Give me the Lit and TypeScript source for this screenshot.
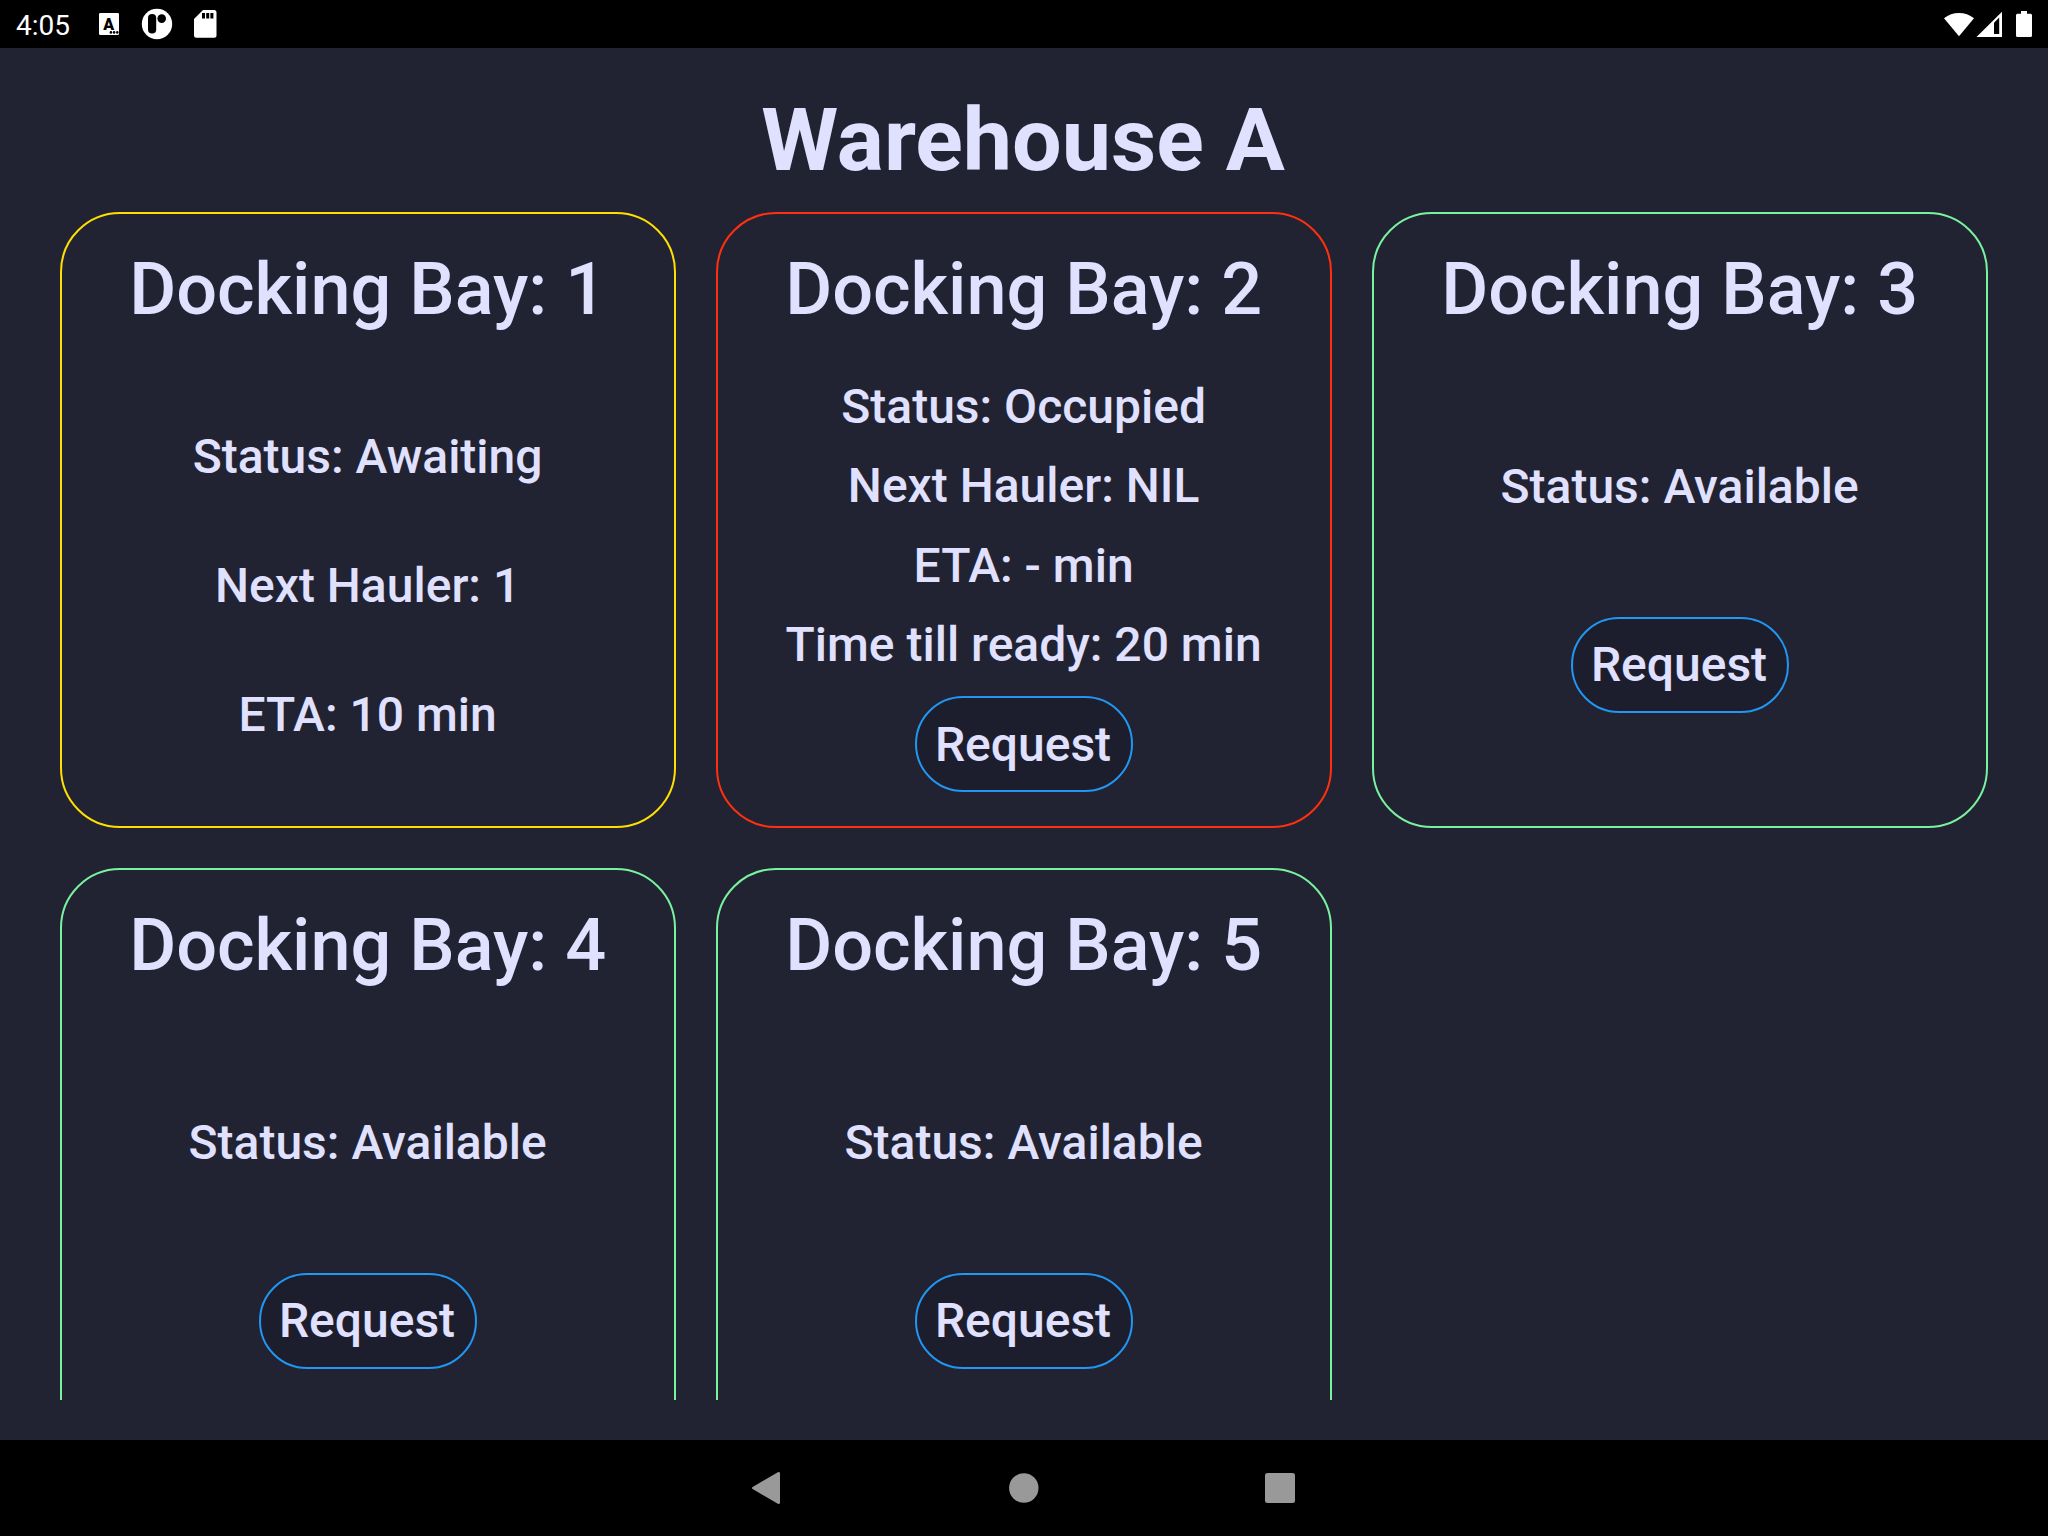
import { LitElement, html, css, svg } from "lit";
import { customElement, property } from "lit/decorators.js";
import { classMap } from "lit/directives/class-map.js";

type State = "awaiting" | "occupied" | "available";
interface Bay {
  id: number;
  state: State;
  lines: string[];
  request: boolean;
}

const BAYS: Bay[] = [
  { id: 1, state: "awaiting", lines: ["Status: Awaiting", "Next Hauler: 1", "ETA: 10 min"], request: false },
  {
    id: 2,
    state: "occupied",
    lines: ["Status: Occupied", "Next Hauler: NIL", "ETA: - min", "Time till ready: 20 min"],
    request: true,
  },
  { id: 3, state: "available", lines: ["Status: Available"], request: true },
  { id: 4, state: "available", lines: ["Status: Available"], request: true },
  { id: 5, state: "available", lines: ["Status: Available"], request: true },
];

@customElement("status-bar")
export class StatusBar extends LitElement {
  static styles = css`
    :host {
      display: flex;
      justify-content: space-between;
      height: 48px;
      background: #000;
      color: #fff;
    }
    .side {
      display: flex;
      align-items: center;
    }
    .clock {
      width: 60px;
      padding: 2px 0 0 16px;
      font: 400 28px/33px Roboto, sans-serif;
    }
    svg {
      display: block;
      height: 48px;
      fill: #fff;
    }
    .cut {
      fill: #000;
    }
    .letter {
      font: 900 16px Roboto, sans-serif;
      fill: #000;
      text-anchor: middle;
    }
  `;

  render() {
    return html`
      <div class="side">
        <div class="clock">4:05</div>
        <svg width="150" viewBox="76 0 150 48">
          <rect x="99" y="13" width="20" height="22" rx="1.2" />
          ${svg`<text class="letter" x="108.800" y="29.600">A</text>`}
          <circle class="cut" cx="110.900" cy="32.400" r="1.300" />
          <circle class="cut" cx="114.100" cy="32.400" r="1.300" />
          <circle class="cut" cx="117.300" cy="32.400" r="1.300" />
          <circle cx="157" cy="24" r="15.2" />
          <rect class="cut" x="148" y="14" width="8.2" height="19.6" rx="4" />
          <circle class="cut" cx="161.7" cy="18.6" r="4.3" />
          <path d="M203 10H214a2.500 2.500 0 0 1 2.500 2.500V35.300a2.500 2.500 0 0 1-2.500 2.500H196.500a2.500 2.500 0 0 1-2.500-2.500V19Z" />
          <path class="cut" d="M202 13h3v5.600h-3zM206.200 13h3v5.600h-3zM210.400 13h3v5.600h-3z" />
        </svg>
      </div>
      <div class="side">
        <svg width="108" viewBox="1940 0 108 48">
          <path d="M1959 36.300 1944 18.200a24.200 24.200 0 0 1 30 0Z" />
          <path d="M1976.500 37 2002 11.800V37Z" />
          <path class="cut" d="M1994 22.800 1999.200 17.600V34H1994Z" />
          <path d="M2021 11h6v2.700h3.500a1.500 1.500 0 0 1 1.500 1.500V35.500a1.500 1.500 0 0 1-1.500 1.500H2017.500a1.500 1.500 0 0 1-1.500-1.500V15.200a1.500 1.500 0 0 1 1.500-1.500H2021Z" />
        </svg>
      </div>
    `;
  }
}

@customElement("nav-bar")
export class NavBar extends LitElement {
  static styles = css`
    :host {
      display: flex;
      align-items: center;
      justify-content: center;
      height: 96px;
      background: #000;
    }
    .key {
      display: flex;
      justify-content: center;
      width: 256px;
    }
    svg {
      display: block;
      width: 40px;
      height: 40px;
      fill: #999;
    }
  `;

  render() {
    return html`
      <div class="key">
        <svg viewBox="0 0 40 40">
          <path d="M4.600 18.900 29.800 4.300Q32 3.200 32 5.400V34.600Q32 36.800 29.800 35.700L4.600 21.100Q3.400 20 4.600 18.900Z" />
        </svg>
      </div>
      <div class="key">
        <svg viewBox="0 0 40 40"><circle cx="19.800" cy="20" r="14.700" /></svg>
      </div>
      <div class="key">
        <svg viewBox="0 0 40 40"><rect x="5" y="5" width="30" height="30" rx="2.500" /></svg>
      </div>
    `;
  }
}

@customElement("bay-card")
export class BayCard extends LitElement {
  @property({ attribute: false }) bay!: Bay;

  static styles = css`
    .card {
      display: flex;
      flex-direction: column;
      align-items: center;
      box-sizing: border-box;
      height: 616px;
      padding: 34px 0 10.400px;
      border: 2px solid;
      border-radius: 60px;
    }
    .awaiting {
      border-color: #ffde03;
    }
    .occupied {
      border-color: #ff3010;
    }
    .available {
      border-color: #79f29e;
    }
    .title {
      margin-bottom: 23px;
      padding-right: 0.800px;
      color: #e0e0ff;
      font-size: 72px;
      line-height: 84px;
    }
    .body {
      flex: 1;
      display: flex;
      flex-direction: column;
      align-items: center;
      justify-content: space-evenly;
      color: #e0e0ff;
      font-size: 48px;
      line-height: 56px;
    }
    .line {
      margin-bottom: -0.650px;
      padding: 0.650px 0.800px 0 0;
    }
    .request {
      box-sizing: border-box;
      height: 96px;
      padding: 1.100px 20px 0 18px;
      border: 2px solid #2196f3;
      border-radius: 48px;
      background: #1d1e2d;
      color: #e0e0ff;
      font: inherit;
    }
  `;

  render() {
    const { id, state, lines, request } = this.bay;
    return html`
      <div class=${classMap({ card: true, [state]: true })}>
        <div class="title">Docking Bay: ${id}</div>
        <div class="body">
          ${lines.map((l) => html`<div class="line">${l}</div>`)}
          ${request ? html`<button class="request">Request</button>` : null}
        </div>
      </div>
    `;
  }
}

@customElement("app-root")
export class AppRoot extends LitElement {
  static styles = css`
    :host {
      display: flex;
      flex-direction: column;
      height: 1536px;
      background: #212332;
      color: #e0e0ff;
      font-family: Roboto, sans-serif;
      font-weight: 500;
    }
    .page {
      flex: 1;
      min-height: 0;
      display: flex;
      flex-direction: column;
      box-sizing: border-box;
      padding: 40px 60px;
    }
    .heading {
      margin: 0 0 21px;
      padding-right: 2px;
      font-size: 88px;
      font-weight: 700;
      line-height: 103px;
      text-align: center;
    }
    .grid {
      flex: 1;
      min-height: 0;
      display: grid;
      grid-template-columns: repeat(3, 1fr);
      grid-auto-rows: 616px;
      gap: 40px;
      overflow: hidden;
    }
  `;

  render() {
    return html`
      <status-bar></status-bar>
      <main class="page">
        <h1 class="heading">Warehouse A</h1>
        <div class="grid">${BAYS.map((b) => html`<bay-card .bay=${b}></bay-card>`)}</div>
      </main>
      <nav-bar></nav-bar>
    `;
  }
}
